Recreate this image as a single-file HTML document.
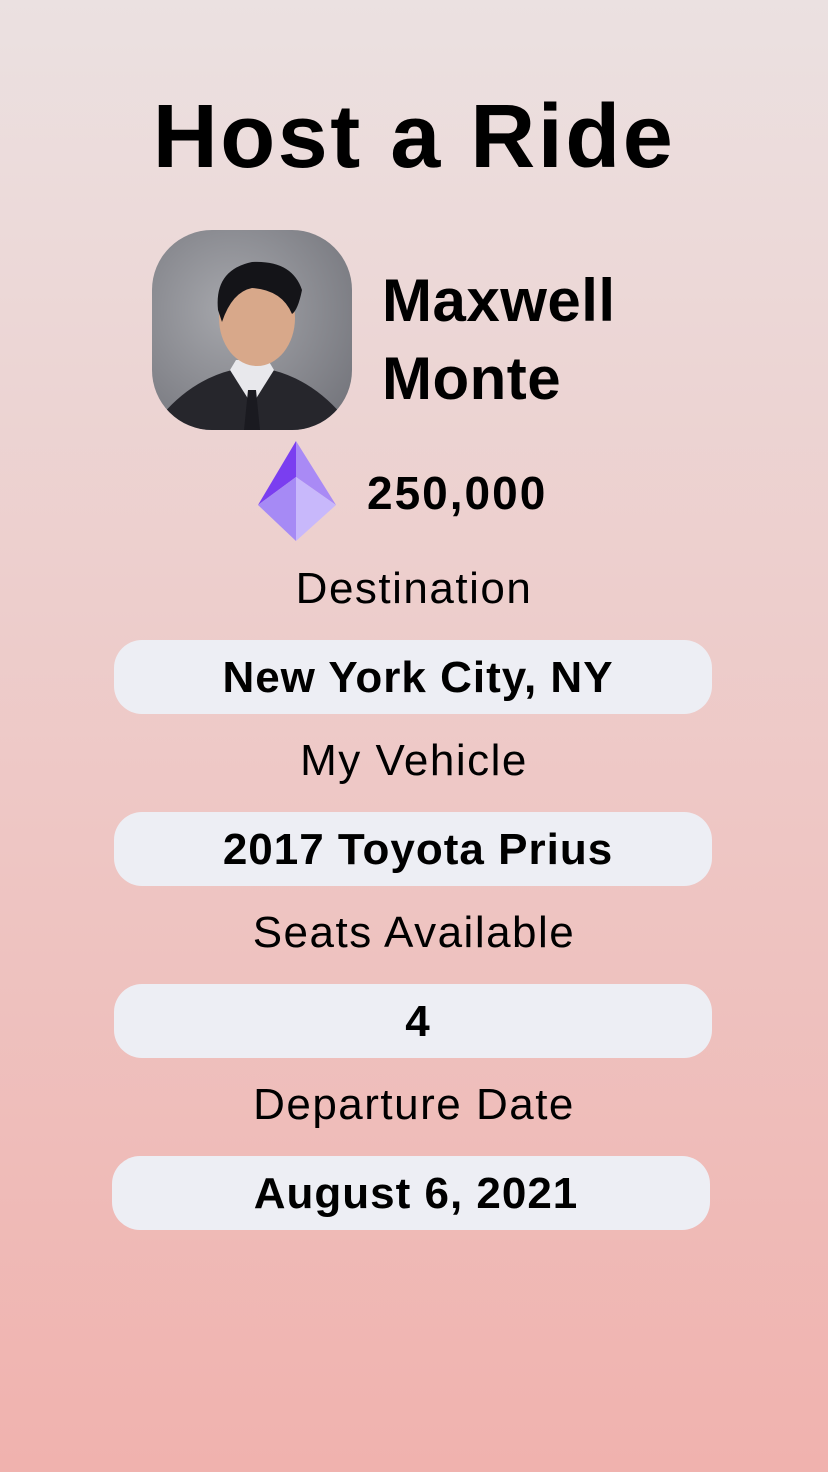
<!DOCTYPE html>
<html><head><style>
html,body{margin:0;padding:0}
body{width:828px;height:1472px;position:relative;overflow:hidden;background:linear-gradient(#ebe1e1,#f0b2ae);font-family:"Liberation Sans",sans-serif;color:#000}
.a{position:absolute;white-space:nowrap}
.c{left:0;width:828px;text-align:center}
.lbl{font-size:44px;letter-spacing:1.5px}
.f{position:absolute;left:114px;width:598px;height:74px;border-radius:28px;background:#edeef4;text-align:center;line-height:76px;font-size:44px;font-weight:bold;letter-spacing:1px;text-indent:10px}
</style></head><body>
<div class="a c" style="top:86px;font-size:90px;font-weight:bold;letter-spacing:2.5px">Host a Ride</div>
<div class="a" style="left:152px;top:230px;width:200px;height:200px;border-radius:60px;overflow:hidden;background:radial-gradient(circle at 40% 40%,#a6a7ac,#6e6f76)">
<svg width="200" height="200" viewBox="0 0 200 200">
<path d="M10 185 Q40 150 80 140 L120 140 Q160 150 190 185 L190 200 L10 200Z" fill="#26262c"/>
<path d="M78 140 L100 175 L122 140 L116 130 L84 130Z" fill="#e8e8ec"/>
<path d="M96 160 L104 160 L108 200 L92 200Z" fill="#1a1a20"/>
<ellipse cx="105" cy="88" rx="38" ry="48" fill="#d8a88a"/>
<path d="M66 80 Q62 40 100 32 Q140 30 150 60 Q146 80 140 84 Q130 60 100 58 Q80 62 70 92Z" fill="#141418"/>
</svg></div>
<div class="a" style="left:382px;top:262px;font-size:60px;font-weight:bold;line-height:78px;letter-spacing:0.5px">Maxwell<br>Monte</div>
<svg class="a" style="left:256px;top:440px" width="82" height="102" viewBox="256 440 82 102">
<polygon points="296,441 258,505 296,477" fill="#7a3ef0"/>
<polygon points="296,441 336,505 296,477" fill="#a98af5"/>
<polygon points="258,505 296,477 296,541" fill="#a68af5"/>
<polygon points="336,505 296,477 296,541" fill="#c8b8fb"/>
</svg>
<div class="a" style="left:367px;top:466px;font-size:46px;font-weight:bold;letter-spacing:2px">250,000</div>
<div class="a c lbl" style="top:564px">Destination</div>
<div class="f" style="top:640px">New York City, NY</div>
<div class="a c lbl" style="top:736px">My Vehicle</div>
<div class="f" style="top:812px">2017 Toyota Prius</div>
<div class="a c lbl" style="top:908px">Seats Available</div>
<div class="f" style="top:984px">4</div>
<div class="a c lbl" style="top:1080px">Departure Date</div>
<div class="f" style="top:1156px;left:112px">August 6, 2021</div>
</body></html>
